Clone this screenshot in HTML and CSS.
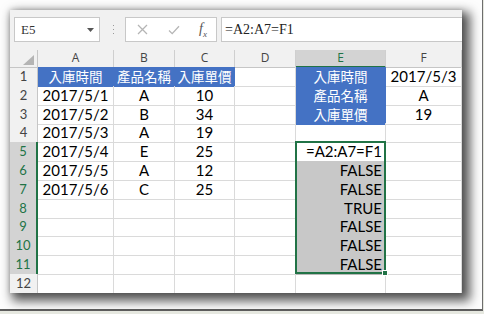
FILE: index.html
```html
<!doctype html>
<html>
<head>
	<title>E5 陣列比較</title>
	<link rel="stylesheet" href="styles.css">
</head>
<body>
	<div class="photo">
		<div class="window">
			<!-- formula bar -->
			<div class="toolbar">
				<div class="namebox">
					<span>E5</span>
					<svg class="drop" width="7" height="4" viewBox="0 0 7 4"><path d="M0 0H7L3.5 4Z" fill="#555"/></svg>
				</div>
				<svg class="grip" width="3" height="12" viewBox="0 0 3 12">
					<rect x="1" y="1" width="1" height="1" fill="#999"/>
					<rect x="1" y="5" width="1" height="1" fill="#999"/>
					<rect x="1" y="9" width="1" height="1" fill="#999"/>
				</svg>
				<div class="fxbuttons">
					<svg width="11" height="11" viewBox="0 0 11 11"><path d="M1 1L10 10M10 1L1 10" stroke="#b5b5b5" stroke-width="1.3" fill="none"/></svg>
					<svg width="12" height="10" viewBox="0 0 12 10"><path d="M1 5.5L4.2 8.6L11 1.2" stroke="#b5b5b5" stroke-width="1.3" fill="none"/></svg>
					<span class="fx"><i>f</i><sub>x</sub></span>
				</div>
				<div class="formula">=A2:A7=F1</div>
			</div>

			<!-- sheet -->
			<div class="sheet">
				<div class="row head">
					<div class="corner"></div>
					<div class="ch">A</div>
					<div class="ch">B</div>
					<div class="ch">C</div>
					<div class="ch">D</div>
					<div class="ch sel">E</div>
					<div class="ch">F</div>
				</div>
				<div class="row">
					<div class="rh">1</div>
					<div class="cell c blue cjk">入庫時間</div>
					<div class="cell c blue cjk">產品名稱</div>
					<div class="cell c blue cjk">入庫單價</div>
					<div class="cell"></div>
					<div class="cell c blue cjk">入庫時間</div>
					<div class="cell c">2017/5/3</div>
				</div>
				<div class="row">
					<div class="rh">2</div>
					<div class="cell c">2017/5/1</div>
					<div class="cell c">A</div>
					<div class="cell c">10</div>
					<div class="cell"></div>
					<div class="cell c blue cjk">產品名稱</div>
					<div class="cell c">A</div>
				</div>
				<div class="row">
					<div class="rh">3</div>
					<div class="cell c">2017/5/2</div>
					<div class="cell c">B</div>
					<div class="cell c">34</div>
					<div class="cell"></div>
					<div class="cell c blue cjk">入庫單價</div>
					<div class="cell c">19</div>
				</div>
				<div class="row">
					<div class="rh">4</div>
					<div class="cell c">2017/5/3</div>
					<div class="cell c">A</div>
					<div class="cell c">19</div>
					<div class="cell"></div>
					<div class="cell"></div>
					<div class="cell"></div>
				</div>
				<div class="row">
					<div class="rh sel">5</div>
					<div class="cell c">2017/5/4</div>
					<div class="cell c">E</div>
					<div class="cell c">25</div>
					<div class="cell"></div>
					<div class="cell r">=A2:A7=F1</div>
					<div class="cell"></div>
				</div>
				<div class="row">
					<div class="rh sel">6</div>
					<div class="cell c">2017/5/5</div>
					<div class="cell c">A</div>
					<div class="cell c">12</div>
					<div class="cell"></div>
					<div class="cell r gray">FALSE</div>
					<div class="cell"></div>
				</div>
				<div class="row">
					<div class="rh sel">7</div>
					<div class="cell c">2017/5/6</div>
					<div class="cell c">C</div>
					<div class="cell c">25</div>
					<div class="cell"></div>
					<div class="cell r gray">FALSE</div>
					<div class="cell"></div>
				</div>
				<div class="row">
					<div class="rh sel">8</div>
					<div class="cell"></div>
					<div class="cell"></div>
					<div class="cell"></div>
					<div class="cell"></div>
					<div class="cell r gray">TRUE</div>
					<div class="cell"></div>
				</div>
				<div class="row">
					<div class="rh sel">9</div>
					<div class="cell"></div>
					<div class="cell"></div>
					<div class="cell"></div>
					<div class="cell"></div>
					<div class="cell r gray">FALSE</div>
					<div class="cell"></div>
				</div>
				<div class="row">
					<div class="rh sel">10</div>
					<div class="cell"></div>
					<div class="cell"></div>
					<div class="cell"></div>
					<div class="cell"></div>
					<div class="cell r gray">FALSE</div>
					<div class="cell"></div>
				</div>
				<div class="row">
					<div class="rh sel">11</div>
					<div class="cell"></div>
					<div class="cell"></div>
					<div class="cell"></div>
					<div class="cell"></div>
					<div class="cell r gray">FALSE</div>
					<div class="cell"></div>
				</div>
				<div class="row">
					<div class="rh">12</div>
					<div class="cell"></div>
					<div class="cell"></div>
					<div class="cell"></div>
					<div class="cell"></div>
					<div class="cell"></div>
					<div class="cell"></div>
				</div>

				<!-- selected range E5:E11 -->
				<div class="selection"><div class="handle"></div></div>
			</div>
		</div>
	</div>
</body>
</html>
```

FILE: styles.css
```css
* {
	box-sizing: border-box;
}

body {
	margin: 0;
	background-color: #e6e8e0;
	font-family: Lato, "Noto Sans CJK TC", sans-serif;
}

.photo {
	width: 483px;
	height: 311px;
	background-color: #fdfdfd;
	border-right: 1px solid #6e6e6e;
	border-bottom: 2px solid #5e5e5e;
	padding: 10px 0 0 10px;
}

.window {
	width: 452px;
	height: 283px;
	background-color: #fff;
	overflow: hidden;
	box-shadow: 5px 5px 10px 3px rgba(0, 0, 0, 0.66), 0 0 5px rgba(0, 0, 0, 0.18);
}

/* formula bar */

.toolbar {
	display: flex;
	align-items: flex-start;
	height: 40px;
	padding: 7px 0 0 4px;
	background-color: #f1f1f1;
}

.namebox {
	display: flex;
	align-items: center;
	justify-content: space-between;
	width: 86px;
	height: 25px;
	padding: 0 5px 0 6px;
	background-color: #fff;
	border: 1px solid #c8c8c8;
	font-family: "Liberation Serif", serif;
	font-size: 13px;
	color: #333;
}

.grip {
	margin: 7px 0 0 12px;
}

.fxbuttons {
	display: flex;
	align-items: center;
	justify-content: space-between;
	width: 92px;
	height: 25px;
	margin-left: 10px;
	padding: 0 9px 0 11px;
	background-color: #fff;
	border: 1px solid #c8c8c8;
}

.fx {
	font-family: "Liberation Serif", serif;
	font-size: 14px;
	color: #555;
}

.fx sub {
	font-size: 9px;
	font-style: italic;
}

.formula {
	flex: 1;
	height: 25px;
	margin-left: 4px;
	padding: 4px 0 0 3px;
	background-color: #fff;
	border: 1px solid #c8c8c8;
	border-right: none;
	font-family: "Liberation Serif", serif;
	font-size: 14px;
	color: #222;
}

/* sheet */

.sheet {
	position: relative;
}

.row {
	display: grid;
	grid-template-columns: 28px 76px 61px 60px 61px 90px 76px;
	height: 18.8px;
}

.row.head {
	height: 17px;
}

.corner {
	position: relative;
	background-color: #f1f1f1;
	border-right: 1px solid #c6c6c6;
	border-bottom: 1px solid #c6c6c6;
}

.corner::after {
	content: "";
	position: absolute;
	right: 3px;
	bottom: 2px;
	border-left: 11px solid transparent;
	border-bottom: 10px solid #b4b4b4;
}

.ch {
	text-align: center;
	background-color: #f1f1f1;
	border-right: 1px solid #cfcfcf;
	border-bottom: 1px solid #c6c6c6;
	font-family: "Open Sans", sans-serif;
	font-size: 12px;
	line-height: 16px;
	color: #444;
}

.ch.sel {
	background-color: #d3d3d3;
	border-bottom: 2px solid #217346;
	color: #217346;
}

.rh {
	text-align: center;
	background-color: #f1f1f1;
	border-right: 1px solid #c6c6c6;
	border-bottom: 1px solid #d8d8d8;
	font-size: 13px;
	line-height: 19px;
	color: #444;
}

.rh.sel {
	background-color: #d3d3d3;
	border-right: 2px solid #217346;
	border-bottom-color: #c0c0c0;
	color: #217346;
}

.cell {
	border-right: 1px solid #dadada;
	border-bottom: 1px solid #dadada;
	font-size: 15px;
	line-height: 19px;
	color: #000;
	white-space: nowrap;
	overflow: hidden;
}

.c {
	text-align: center;
}

.r {
	text-align: right;
	padding-right: 3px;
}

.cjk {
	font-family: "Noto Sans CJK TC", sans-serif;
	font-size: 13.5px;
}

.blue {
	background-color: #4472c4;
	border-color: #4472c4;
	color: #fff;
}

.gray {
	background-color: #c8c8c8;
	border-bottom-color: #b8b8b8;
}

.selection {
	position: absolute;
	left: 285px;
	top: 91.2px;
	width: 91px;
	height: 132.6px;
	border: 2px solid #217346;
}

.handle {
	position: absolute;
	right: -4px;
	bottom: -4px;
	width: 6px;
	height: 6px;
	background-color: #217346;
	border: 1px solid #fff;
}
```
